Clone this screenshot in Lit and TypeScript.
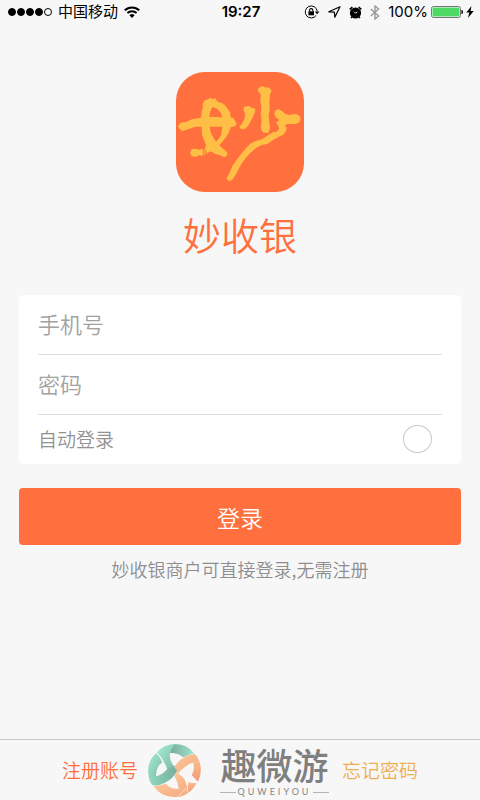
import { LitElement, html, css, svg } from "lit";
import { customElement, state } from "lit/decorators.js";

const wifi = svg`<svg class="icon" width="16" height="12" viewBox="0 0 16 12" fill="none" stroke="#000" stroke-width="2">
  <path d="M.8 4.3a10.4 10.4 0 0 1 14.4 0M3.4 7a6.6 6.6 0 0 1 9.2 0"/><path d="M8 12 5.4 9.3a3.8 3.8 0 0 1 5.2 0z" fill="#000" stroke="none"/></svg>`;
const rotationLock = svg`<svg class="icon" width="16" height="14" viewBox="0 0 16 14" fill="none" stroke="#000">
  <path d="M12.2 10.4a6 6 0 1 1 1-4.4" stroke-width="1"/><path d="M10.8 6.4h4.6l-2.3 2.8z" fill="#000" stroke="none"/>
  <rect x="4.4" y="6.3" width="5.6" height="4" fill="#000" stroke="none"/><path d="M5.6 6.6V5.2a1.6 1.6 0 0 1 3.2 0v1.4" stroke-width="1.1"/></svg>`;
const locationArrow = svg`<svg class="icon" width="13" height="12" viewBox="0 0 13 12" fill="none" stroke="#000" stroke-width="1.2" stroke-linejoin="round">
  <path d="M12 .8.8 5.8l5.6.4.4 5z"/></svg>`;
const alarm = svg`<svg class="icon" width="13" height="13" viewBox="0 0 13 13">
  <circle cx="6.5" cy="7" r="5.6"/><path d="M.7 3.4 3.4 1M12.3 3.4 9.6 1" stroke="#000" stroke-width="1.5"/><path d="M3.2 10.6l-1.2 1.6M9.8 10.6l1.2 1.6" stroke="#000" stroke-width="1.3"/>
  <path d="M5 5.6l1.6 1.6L8.4 6" fill="none" stroke="#fff" stroke-width=".9"/></svg>`;
const bluetooth = svg`<svg class="icon" width="10" height="15" viewBox="0 0 10 15" fill="none" stroke="#999" stroke-width="1.4">
  <path d="M.8 4 8.6 11 5 14V1l3.6 3L.8 11"/></svg>`;
const battery = svg`<svg class="icon" width="32" height="12" viewBox="0 0 32 12">
  <rect x=".5" y=".5" width="29" height="11" rx="2" fill="#fff" stroke="#777"/><rect x="1.5" y="1.5" width="27" height="9" rx="1" fill="#4cd964"/>
  <path d="M30.3 4a2 2 0 0 1 0 4z" fill="#222"/></svg>`;
const bolt = svg`<svg class="icon" width="8" height="12" viewBox="0 0 8 12"><path d="M5.5 0 .3 6.6h3L2 12l5.7-7H4.6z"/></svg>`;

const logo = svg`<svg class="logo" viewBox="18 24 384 360" role="img" aria-label="妙收银">
  <rect x="18" y="24" width="384" height="360" rx="86" fill="#ff703e"/>
  <g fill="#ffbe45">
    <path fill-rule="evenodd" d="M98 120L104 109L114 106L120 101L127 105L136 103L142 113L156 117L165 124L172 133L180 145L182 160L191 163L200 179L195 187L182 190L176 207L168 220L157 233L148 244L156 251L171 264L172 273L164 280L148 273L134 269L122 262L112 268L105 254L108 242L101 226L96 212L95 188L76 188L56 195L38 201L28 195L24 186L32 176L50 173L66 166L93 161L95 142L99 132ZM128 129L121 142L117 158L158 160L151 145L142 134ZM119 188L122 205L129 219L138 234L146 225L154 211L157 188Z"/>
    <path d="M65 255L77 254L86 257L98 254V276L88 274L76 279L65 276L60 267ZM101 256H104V273H101ZM107 260H109V272H107Z"/>
    <path d="M221 129L236 126L245 131L256 134L255 144L249 158L242 172L234 186L224 195L213 195L207 188L216 179L223 165L226 151L221 140Z"/>
    <path d="M265 72L277 66L284 70L298 71L305 80L300 91L298 112L299 136L296 157L298 177L300 193L295 207L281 206L274 199L272 187L275 170L272 151L274 130L271 110L272 91L264 82Z"/>
    <path d="M315 140L326 135L336 141L346 150L357 153L375 150L386 153L392 163L389 174L378 180L352 180L344 184L350 191L348 201L340 212L325 219L308 229L292 240L275 243L258 252L242 266L229 280L216 297L207 313L197 332L187 347L178 352L169 344L179 326L186 308L199 289L213 271L228 252L241 239L257 231L276 226L294 214L309 205L320 203L328 194L324 184L318 176L328 168L317 160L313 151Z"/>
  </g></svg>`;

const emblem = svg`<svg class="emblem" viewBox="9 17 160 160" aria-hidden="true">
  <defs>
    <linearGradient id="mint" x1="0" y1="0" x2="1" y2="1"><stop offset="0" stop-color="#a6edd5"/><stop offset="1" stop-color="#7cb9a4"/></linearGradient>
    <linearGradient id="mintDark" x1="0" y1="0" x2="1" y2="0"><stop offset="0" stop-color="#7aa999"/><stop offset="1" stop-color="#9ee6cd"/></linearGradient>
    <linearGradient id="mintBand" x1="0" y1="0" x2="1" y2="0"><stop offset="0" stop-color="#93d8c0"/><stop offset="1" stop-color="#74af9b"/></linearGradient>
    <linearGradient id="peach" x1="0" y1="0" x2="1" y2="1"><stop offset="0" stop-color="#fccb9d"/><stop offset="1" stop-color="#f5a47c"/></linearGradient>
    <linearGradient id="coral" x1="0" y1="0" x2="0" y2="1"><stop offset="0" stop-color="#f9ba8c"/><stop offset="1" stop-color="#f39b79"/></linearGradient>
  </defs>
  <path d="M88 17Q128 17 148 45Q132 49 115 57Q100 43 74 44Q80 27 88 17Z" fill="url(#mintDark)"/>
  <path d="M36 42Q58 17 92 17Q80 29 76 42Q71 67 90 87L70 102Q60 67 36 42Z" fill="url(#mint)"/>
  <path d="M34 44Q47 57 53 72Q33 84 33 116L22 118L10 106Q6 68 34 44Z" fill="url(#mint)"/>
  <path d="M10 106Q24 119 43 111Q56 105 67 93L88 82L98 97Q85 122 60 134Q40 145 22 141Q11 127 10 106Z" fill="url(#mintBand)"/>
  <path d="M88 88Q109 51 150 47Q160 57 164 69Q142 69 121 86Q105 98 99 108L98 97Z" fill="url(#peach)"/>
  <path d="M98 97L88 112Q99 131 102 151L105 177L123 168Q129 151 123 134Q117 114 99 107Z" fill="url(#peach)"/>
  <path d="M144 70L164 69Q175 100 160 131L141 111Q152 92 144 70Z" fill="url(#coral)"/>
  <path d="M25 143Q42 145 63 136Q76 154 98 152Q119 151 132 136L128 133L155 136Q131 178 87 177Q47 176 25 143Z" fill="url(#peach)"/>
  <path d="M128 133L155 136Q145 153 131 164Q125 150 132 137Z" fill="url(#coral)"/>
  <path d="M35 43Q48 57 54 73M129 134Q126 152 131 165M98 177Q108 168 124 151" fill="none" stroke="#f7f7f7" stroke-width="2"/>
</svg>`;

@customElement("app-root")
export class AppRoot extends LitElement {
  static styles = css`
    :host {
      display: flex;
      flex-direction: column;
      min-height: 100vh;
      background: #f7f7f7;
      font-family: "Noto Sans CJK SC", sans-serif;
      font-weight: 350;
      color: #999;
    }
    * { box-sizing: border-box; }
    svg { display: block; flex: none; }
    .status {
      display: grid;
      grid-template-columns: 1fr auto 1fr;
      align-items: center;
      height: 24px;
      padding: 0 6px 0 8px;
      color: #000;
      font-size: 15px;
      line-height: 24px;
      font-family: Inter, "Noto Sans CJK SC", sans-serif;
      font-weight: 400;
    }
    .left, .right { display: flex; align-items: center; }
    .left { gap: 6px; }
    .right { justify-content: flex-end; gap: 8px; }
    .dots { display: flex; gap: 1px; }
    .dot { width: 8px; height: 8px; border: 1px solid #000; border-radius: 50%; background: #000; }
    .dot.empty { background: none; }
    .time { font-weight: 600; }
    .power { display: flex; align-items: center; gap: 3px; }
    .hero {
      display: flex;
      flex-direction: column;
      align-items: center;
      padding-top: 48px;
    }
    .logo { width: 128px; height: 120px; }
    h1 {
      margin: 14px 0 0;
      font-size: 38px;
      line-height: 56px;
      font-weight: 350;
      color: #ff703e;
    }
    form { margin: 33px 19px 0; }
    .card { padding: 0 19px; border-radius: 5px; background: #fff; }
    .field {
      display: block;
      width: 100%;
      height: 60px;
      padding: 0 0 4px;
      border: 0;
      border-bottom: 1px solid #ddd;
      border-radius: 0;
      outline: none;
      background: none;
      font: inherit;
      font-size: 22px;
      color: #333;
    }
    .field::placeholder { color: #a2a2a2; opacity: 1; }
    .auto {
      display: flex;
      align-items: center;
      justify-content: space-between;
      height: 49px;
      padding: 0 10px 2px 0;
      font-size: 19px;
      color: #929292;
    }
    .auto input {
      appearance: none;
      width: 29px;
      height: 28px;
      margin: 0;
      border: 1px solid #c8c8ca;
      border-radius: 50%;
      background: #fff;
    }
    .auto input:checked { background: #ff703e; }
    .login {
      display: block;
      width: 100%;
      height: 57px;
      margin-top: 24px;
      padding: 0;
      border: 0;
      border-radius: 4px;
      background: #ff703e;
      color: #fff;
      font: inherit;
      font-size: 23px;
    }
    .hint {
      margin: 11px 0 0;
      text-align: center;
      font-size: 18px;
      line-height: 26px;
      color: #8e8e92;
    }
    footer {
      display: flex;
      align-items: center;
      justify-content: center;
      gap: 10px;
      height: 61px;
      margin-top: auto;
      border-top: 1px solid #c8c8c8;
    }
    footer a {
      font-size: 19px;
      line-height: 28px;
      text-decoration: none;
      white-space: nowrap;
    }
    .register { color: #ff703e; }
    .forgot { color: #efae4e; }
    .brand { display: flex; align-items: center; gap: 16px; }
    .emblem { width: 53px; height: 53px; }
    .name { display: flex; flex-direction: column; align-items: center; width: 115px; }
    .name strong {
      font-size: 36px;
      line-height: 44px;
      font-weight: 500;
      color: #7f7f7f;
    }
    .latin {
      display: flex;
      align-items: center;
      gap: 2px;
      font-family: Lato, sans-serif;
      font-size: 9px;
      line-height: 12px;
      letter-spacing: 3px;
      font-weight: 400;
      color: #858585;
    }
    .latin::before, .latin::after { content: ""; width: 16px; height: 1px; background: #b5b5b5; }
  `;

  @state() private auto = false;

  render() {
    return html`
      <div class="status">
        <div class="left">
          <span class="dots">${[1, 1, 1, 1, 0].map((on) => html`<i class="dot ${on ? "" : "empty"}"></i>`)}</span>
          <span>中国移动</span>${wifi}
        </div>
        <span class="time">19:27</span>
        <div class="right">
          ${rotationLock}${locationArrow}${alarm}${bluetooth}
          <span class="power"><span>100%</span>${battery}${bolt}</span>
        </div>
      </div>
      <header class="hero">${logo}<h1>妙收银</h1></header>
      <form @submit=${(e: Event) => e.preventDefault()}>
        <div class="card">
          <input class="field" type="tel" placeholder="手机号" aria-label="手机号" />
          <input class="field" type="password" placeholder="密码" aria-label="密码" />
          <label class="auto">自动登录
            <input type="checkbox" .checked=${this.auto}
              @change=${(e: Event) => (this.auto = (e.target as HTMLInputElement).checked)} />
          </label>
        </div>
        <button class="login" type="submit">登录</button>
        <p class="hint">妙收银商户可直接登录,无需注册</p>
      </form>
      <footer>
        <a class="register" href="#register">注册账号</a>
        <div class="brand">${emblem}
          <div class="name"><strong>趣微游</strong><span class="latin">QUWEIYOU</span></div>
        </div>
        <a class="forgot" href="#forgot">忘记密码</a>
      </footer>
    `;
  }
}
